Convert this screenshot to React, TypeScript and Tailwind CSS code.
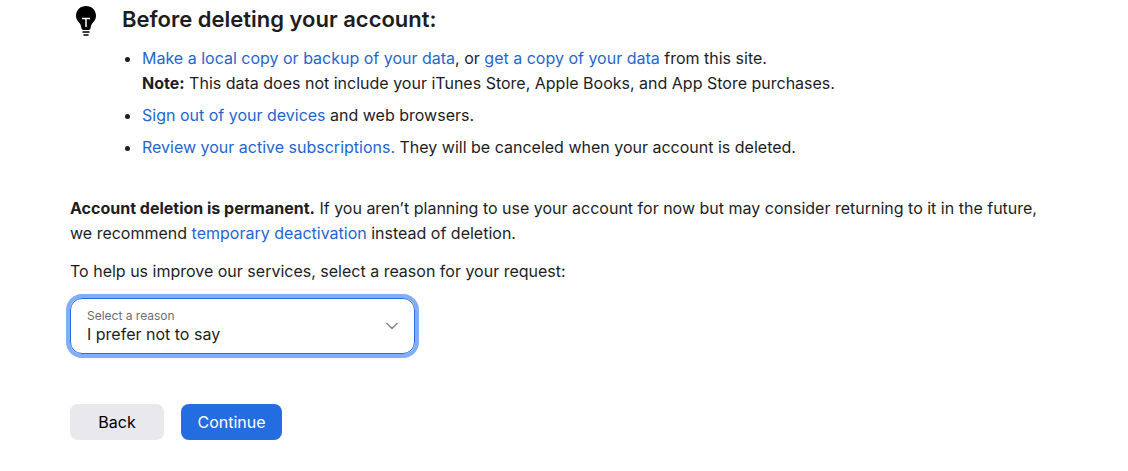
const link = "text-[#1f66d0]";

const reasons = ["I prefer not to say", "I no longer use this account", "I have more than one account", "Other"];

function BulbIcon() {
  return (
    <svg className="mt-[5px] h-8 w-8 shrink-0" viewBox="0 0 32 32" aria-hidden="true">
      <path d="M16 1C10.300 1 6 5.200 6 10.800c0 3 1.400 5 3.200 7 1.300 1.500 1.900 2.900 2.100 4.700.2 1.600.8 2.500 2.200 2.500h5c1.400 0 2-.9 2.200-2.500.2-1.800.8-3.200 2.100-4.700 1.800-2 3.200-4 3.200-7C26 5.200 21.700 1 16 1z" />
      <path d="M12.500 27h7M13.500 30h5" stroke="#000" strokeWidth="1.500" />
      <path d="M12 13.500h8M16 13.500v8.500" stroke="#fff" strokeWidth="1.500" />
    </svg>
  );
}

export default function App() {
  return (
    <main className="bg-white px-[70px] pb-8 font-['Inter',sans-serif] text-base leading-[25px] text-[#1d1d1f]">
      <section className="flex gap-5">
        <BulbIcon />
        <div>
          <h2 className="pt-1 text-[22px] leading-[30px] font-semibold">Before deleting your account:</h2>
          <ul className="mt-3 list-disc space-y-[7px] pl-5">
            <li>
              <a href="#backup" className={link}>Make a local copy or backup of your data</a>, or{" "}
              <a href="#copy" className={link}>get a copy of your data</a> from this site.
              <br />
              <b className="font-bold">Note:</b> This data does not include your iTunes Store, Apple Books, and App Store purchases.
            </li>
            <li>
              <a href="#devices" className={link}>Sign out of your devices</a> and web browsers.
            </li>
            <li>
              <a href="#subscriptions" className={link}>Review your active subscriptions.</a> They will be canceled when your account is deleted.
            </li>
          </ul>
        </div>
      </section>

      <p className="mt-9">
        <b className="font-bold">Account deletion is permanent.</b> If you aren’t planning to use your account for now but may consider returning to it in the future, we recommend{" "}
        <a href="#deactivate" className={link}>temporary deactivation</a> instead of deletion.
      </p>
      <p className="mt-[13px]">To help us improve our services, select a reason for your request:</p>

      <div className="relative mt-[14px] w-full max-w-[345px]">
        <label htmlFor="reason" className="absolute top-[10px] left-[17px] text-xs leading-4 text-[#6e6e73]">Select a reason</label>
        <select id="reason" className="block h-14 w-full appearance-none rounded-xl border border-[#246de0] bg-transparent px-4 pt-4 ring-4 ring-[#80aefa] outline-none">
          {reasons.map((r) => (
            <option key={r}>{r}</option>
          ))}
        </select>
        <svg className="pointer-events-none absolute top-6 right-[17px] h-2 w-3" viewBox="0 0 12 8" fill="none" stroke="#86868b" strokeWidth="1.500" strokeLinecap="round" strokeLinejoin="round" aria-hidden="true">
          <path d="M1 1.500l5 5 5-5" />
        </svg>
      </div>

      <div className="mt-[50px] flex gap-[17px]">
        <button type="button" className="h-9 w-[94px] rounded-lg bg-[#e8e8ed] text-black">Back</button>
        <button type="button" className="h-9 w-[101px] rounded-lg bg-[#246de0] text-white">Continue</button>
      </div>
    </main>
  );
}
